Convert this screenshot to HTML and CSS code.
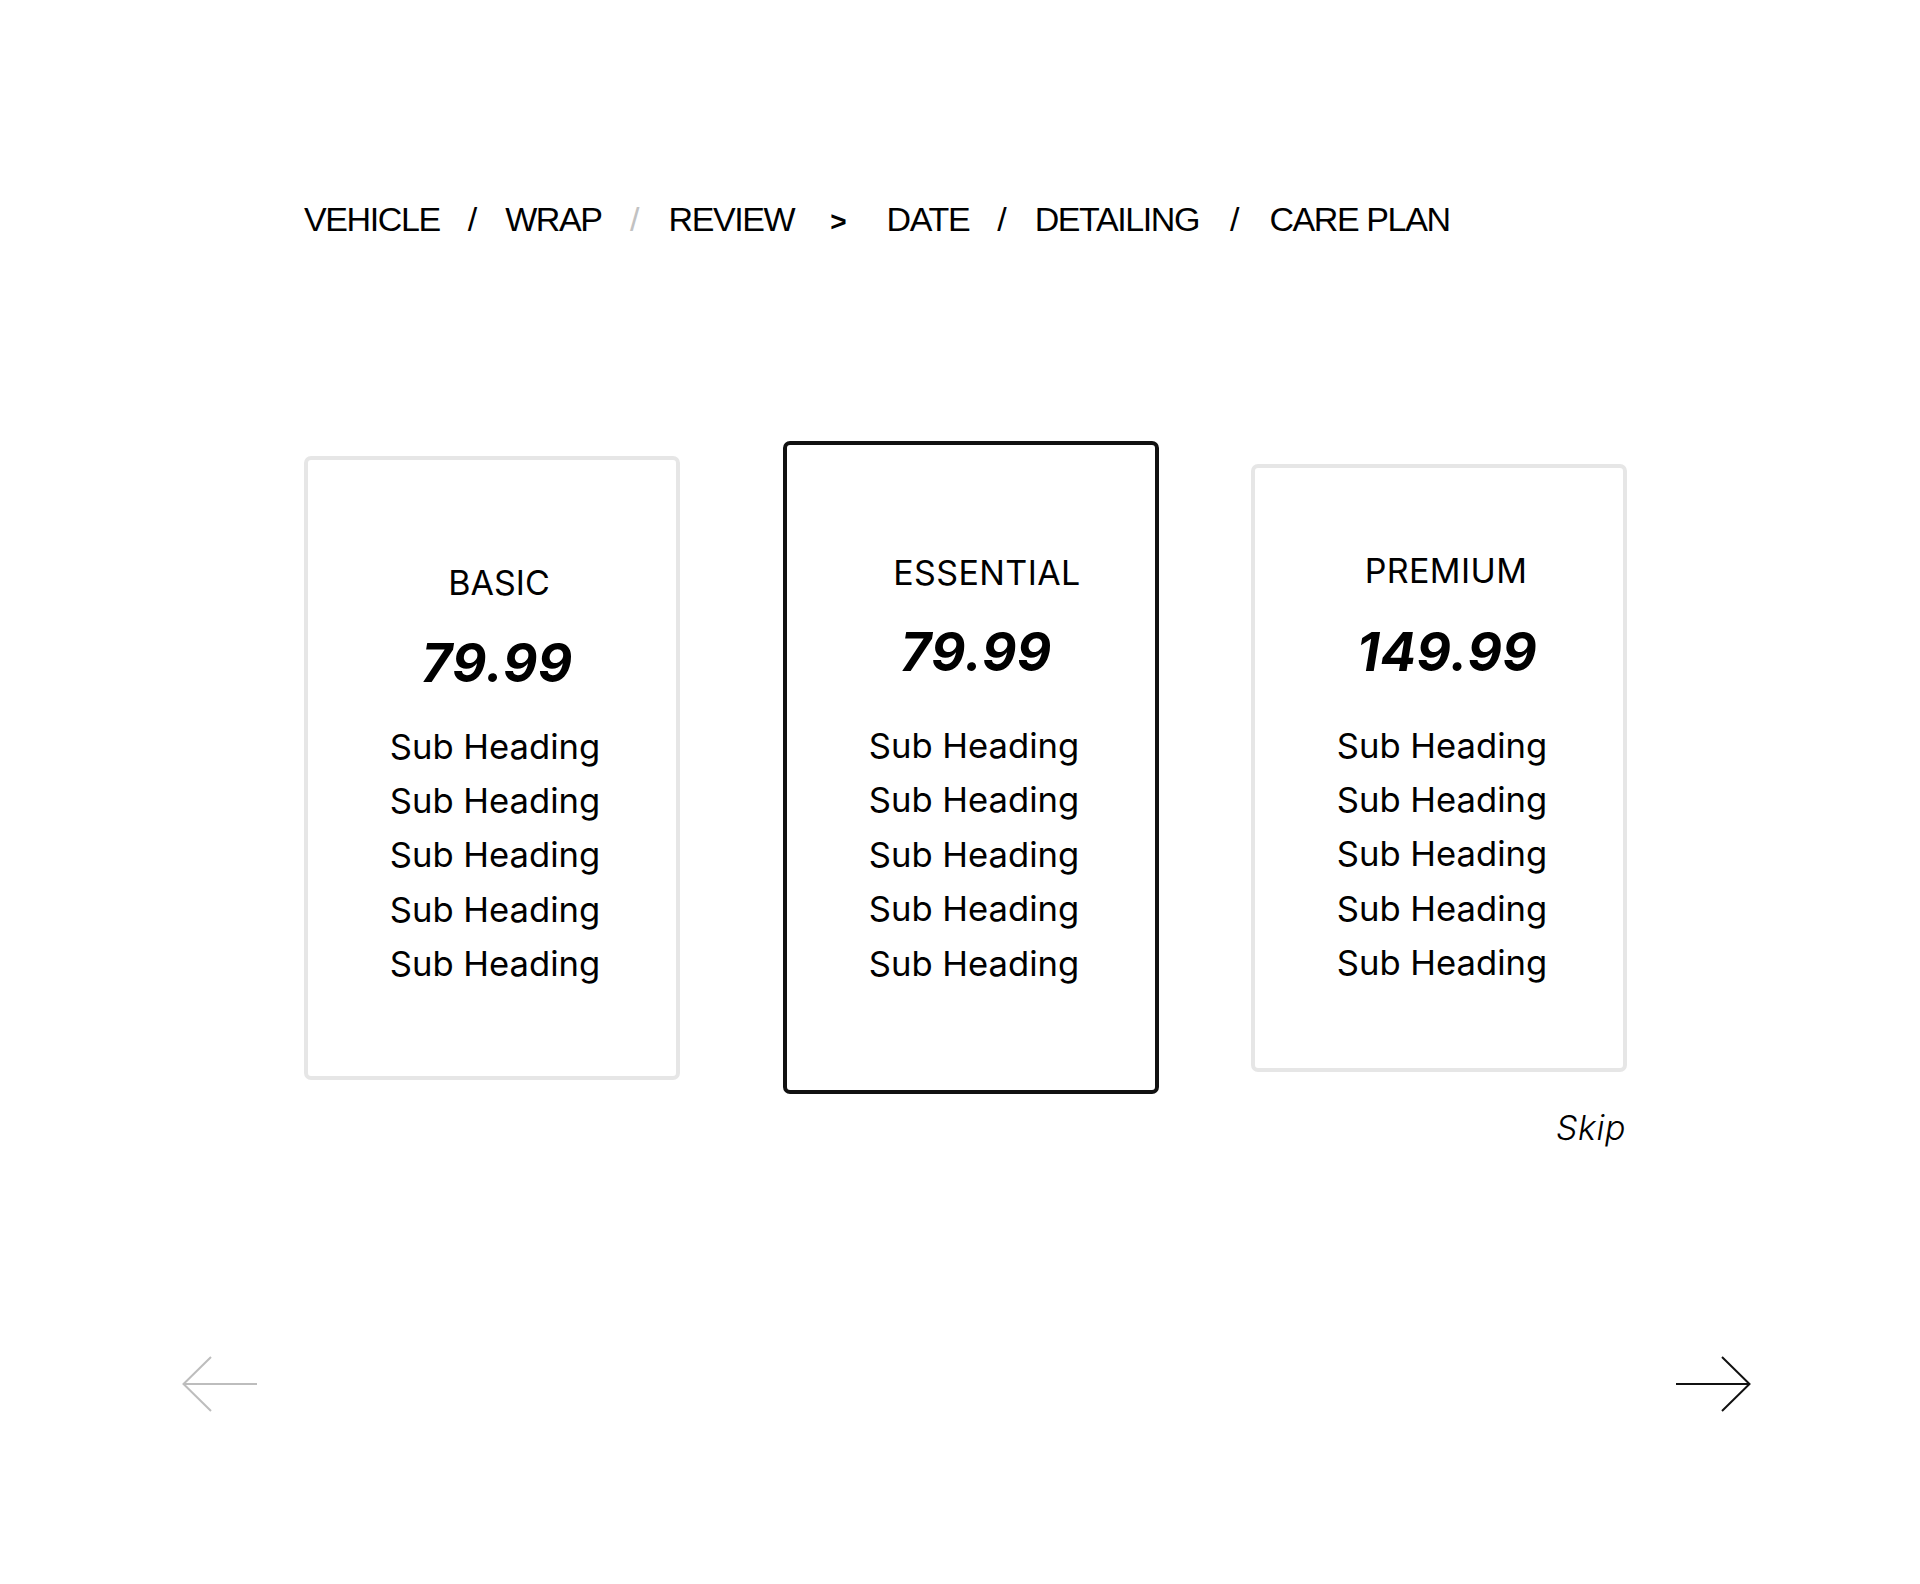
FILE: index.html
```html
<!DOCTYPE html>
<html lang="en">
<head>
<meta charset="utf-8">
<title>Care Plan</title>
<link rel="stylesheet" href="styles.css">
</head>
<body>
<div class="page">
  <nav class="crumbs">
    <span class="crumb">VEHICLE</span>
    <span class="sep">/</span>
    <span class="crumb">WRAP</span>
    <span class="sep sep--muted">/</span>
    <span class="crumb">REVIEW</span>
    <span class="sep sep--next">&gt;</span>
    <span class="crumb">DATE</span>
    <span class="sep">/</span>
    <span class="crumb">DETAILING</span>
    <span class="sep sep--wide">/</span>
    <span class="crumb">CARE PLAN</span>
  </nav>

  <section class="plans">
    <div class="plan plan--basic">
      <div class="plan__title">BASIC</div>
      <div class="plan__price">79.99</div>
      <ul class="plan__list">
        <li>Sub Heading</li>
        <li>Sub Heading</li>
        <li>Sub Heading</li>
        <li>Sub Heading</li>
        <li>Sub Heading</li>
      </ul>
    </div>
    <div class="plan plan--essential">
      <div class="plan__title">ESSENTIAL</div>
      <div class="plan__price">79.99</div>
      <ul class="plan__list">
        <li>Sub Heading</li>
        <li>Sub Heading</li>
        <li>Sub Heading</li>
        <li>Sub Heading</li>
        <li>Sub Heading</li>
      </ul>
    </div>
    <div class="plan plan--premium">
      <div class="plan__title">PREMIUM</div>
      <div class="plan__price">149.99</div>
      <ul class="plan__list">
        <li>Sub Heading</li>
        <li>Sub Heading</li>
        <li>Sub Heading</li>
        <li>Sub Heading</li>
        <li>Sub Heading</li>
      </ul>
    </div>
  </section>

  <div class="skip-row">
    <a class="skip" href="#">Skip</a>
  </div>

  <div class="arrows">
    <a class="arrow arrow--prev" href="#" aria-label="Previous">
      <svg width="76" height="58" viewBox="0 0 76 58" fill="none" stroke="#bdbdbd" stroke-width="2">
        <line x1="1.5" y1="29" x2="75" y2="29"/>
        <polyline points="29,2 1.5,29 29,56"/>
      </svg>
    </a>
    <a class="arrow arrow--next" href="#" aria-label="Next">
      <svg width="76" height="58" viewBox="0 0 76 58" fill="none" stroke="#111" stroke-width="2">
        <line x1="1" y1="29" x2="74.5" y2="29"/>
        <polyline points="47,2 74.5,29 47,56"/>
      </svg>
    </a>
  </div>
</div>
</body>
</html>
```

FILE: styles.css
```css
* { box-sizing: border-box; }

html, body {
  margin: 0;
  padding: 0;
  background: #fff;
  color: #000;
}

.page {
  width: 1920px;
  min-height: 1584px;
}

/* breadcrumb */
.crumbs {
  display: flex;
  align-items: baseline;
  padding: 200px 0 0 304px;
  font-family: "Liberation Sans", Arial, sans-serif;
  font-size: 34px;
  letter-spacing: -1.4px;
  line-height: 39px;
  color: #000;
}
.sep {
  margin: 0 28px 0 28px;
  letter-spacing: 0;
}
.sep--muted {
  color: #c2c2c2;
  margin: 0 29px 0 28.5px;
}
.sep--next {
  margin: 0 40px 0 36px;
  font-weight: 700;
  font-size: 28px;
}
.sep--wide { margin: 0 30px 0 31px; }

/* plans */
.plans {
  display: flex;
  align-items: center;
  margin: 200px 0 0 304px;
}

.plan {
  width: 376px;
  border: 4px solid #e6e6e6;
  border-radius: 7px;
  display: flex;
  flex-direction: column;
  align-items: center;
  padding-left: 6px;
  font-family: Inter, "Noto Sans", sans-serif;
  color: #000;
}

.plan__title {
  font-size: 34px;
  line-height: 40px;
  font-weight: 400;
  letter-spacing: 0.4px;
}

.plan__price {
  font-size: 53px;
  line-height: 60px;
  font-weight: 700;
  font-style: italic;
  letter-spacing: 0.5px;
}

.plan__list {
  list-style: none;
  margin: 0;
  padding: 0;
  text-align: center;
  font-size: 34.6px;
  line-height: 54.4px;
  font-weight: 400;
}

.plan--basic {
  padding-top: 103px;
  padding-bottom: 85px;
}
.plan--basic .plan__title { padding-left: 8px; letter-spacing: 0; }
.plan--basic .plan__price { margin-top: 30px; padding-left: 4px; }
.plan--basic .plan__list { margin-top: 26px; }

.plan--essential {
  border-color: #111;
  margin: 0 92px 0 103px;
  padding-top: 108px;
  padding-bottom: 100px;
}
.plan--essential .plan__title { padding-left: 26px; }
.plan--essential .plan__price { margin-top: 29px; padding-left: 4px; }
.plan--essential .plan__list { margin-top: 36px; }

.plan--premium {
  padding-top: 83px;
  padding-bottom: 78px;
}
.plan--premium .plan__title { padding-left: 8px; }
.plan--premium .plan__price { margin-top: 31px; padding-left: 10px; }
.plan--premium .plan__list { margin-top: 36px; }

/* skip */
.skip-row {
  display: flex;
  justify-content: flex-end;
  width: 1626px;
  margin-top: 14px;
}
.skip {
  font-family: Inter, "Noto Sans", sans-serif;
  font-style: italic;
  font-weight: 300;
  font-size: 34px;
  line-height: 40px;
  color: #000;
  text-decoration: none;
  letter-spacing: 0.5px;
}

/* arrows */
.arrows {
  display: flex;
  justify-content: space-between;
  align-items: center;
  padding: 0 169px 0 182px;
  margin-top: 207px;
}
.arrow {
  display: block;
  line-height: 0;
}
.arrow svg { display: block; }
```
